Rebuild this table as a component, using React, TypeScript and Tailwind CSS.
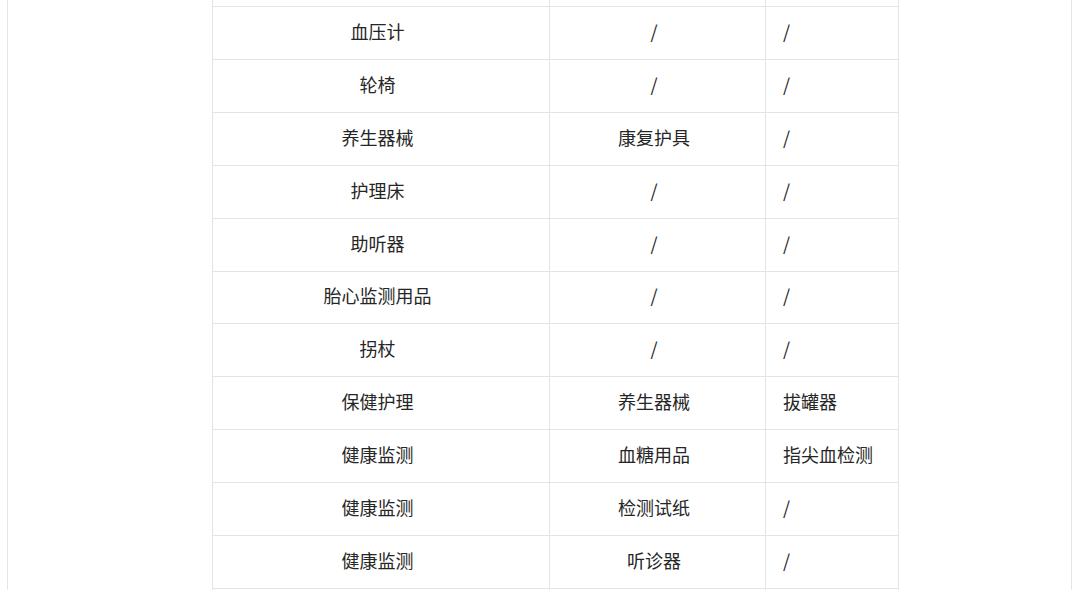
import React from "react";

const rows: [string, string, string][] = [
  ["", "", ""],
  ["血压计", "/", "/"],
  ["轮椅", "/", "/"],
  ["养生器械", "康复护具", "/"],
  ["护理床", "/", "/"],
  ["助听器", "/", "/"],
  ["胎心监测用品", "/", "/"],
  ["拐杖", "/", "/"],
  ["保健护理", "养生器械", "拔罐器"],
  ["健康监测", "血糖用品", "指尖血检测"],
  ["健康监测", "检测试纸", "/"],
  ["健康监测", "听诊器", "/"],
  ["", "", ""],
];

export default function App() {
  return (
    <div
      className="w-[1080px] h-[590px] overflow-hidden bg-white"
      style={{ fontFamily: '"Noto Sans CJK SC", "Noto Sans", sans-serif' }}
    >
      <div className="flow-root ml-[7px] w-[1065px] h-[590px] border-x border-[#e6e6e6] bg-white">
        <table className="ml-[204px] mt-[-46.5px] w-[686px] border-collapse table-fixed text-[18px] text-[#262626]">
          <colgroup>
            <col className="w-[337px]" />
            <col className="w-[216px]" />
            <col className="w-[133px]" />
          </colgroup>
          <tbody>
            {rows.map((r, i) => (
              <tr key={i} className="h-[52.85px]">
                <td className="border border-[#e4e4e4] text-center pl-[12px] pr-[19px] pt-0 pb-[3px]">{r[0]}</td>
                <td className="border border-[#e4e4e4] text-center pl-[12px] pr-[19px] pt-0 pb-[3px]">{r[1]}</td>
                <td className="border border-[#e4e4e4] text-left pl-[17px] pr-0 pt-0 pb-[3px]">{r[2]}</td>
              </tr>
            ))}
          </tbody>
        </table>
      </div>
    </div>
  );
}
